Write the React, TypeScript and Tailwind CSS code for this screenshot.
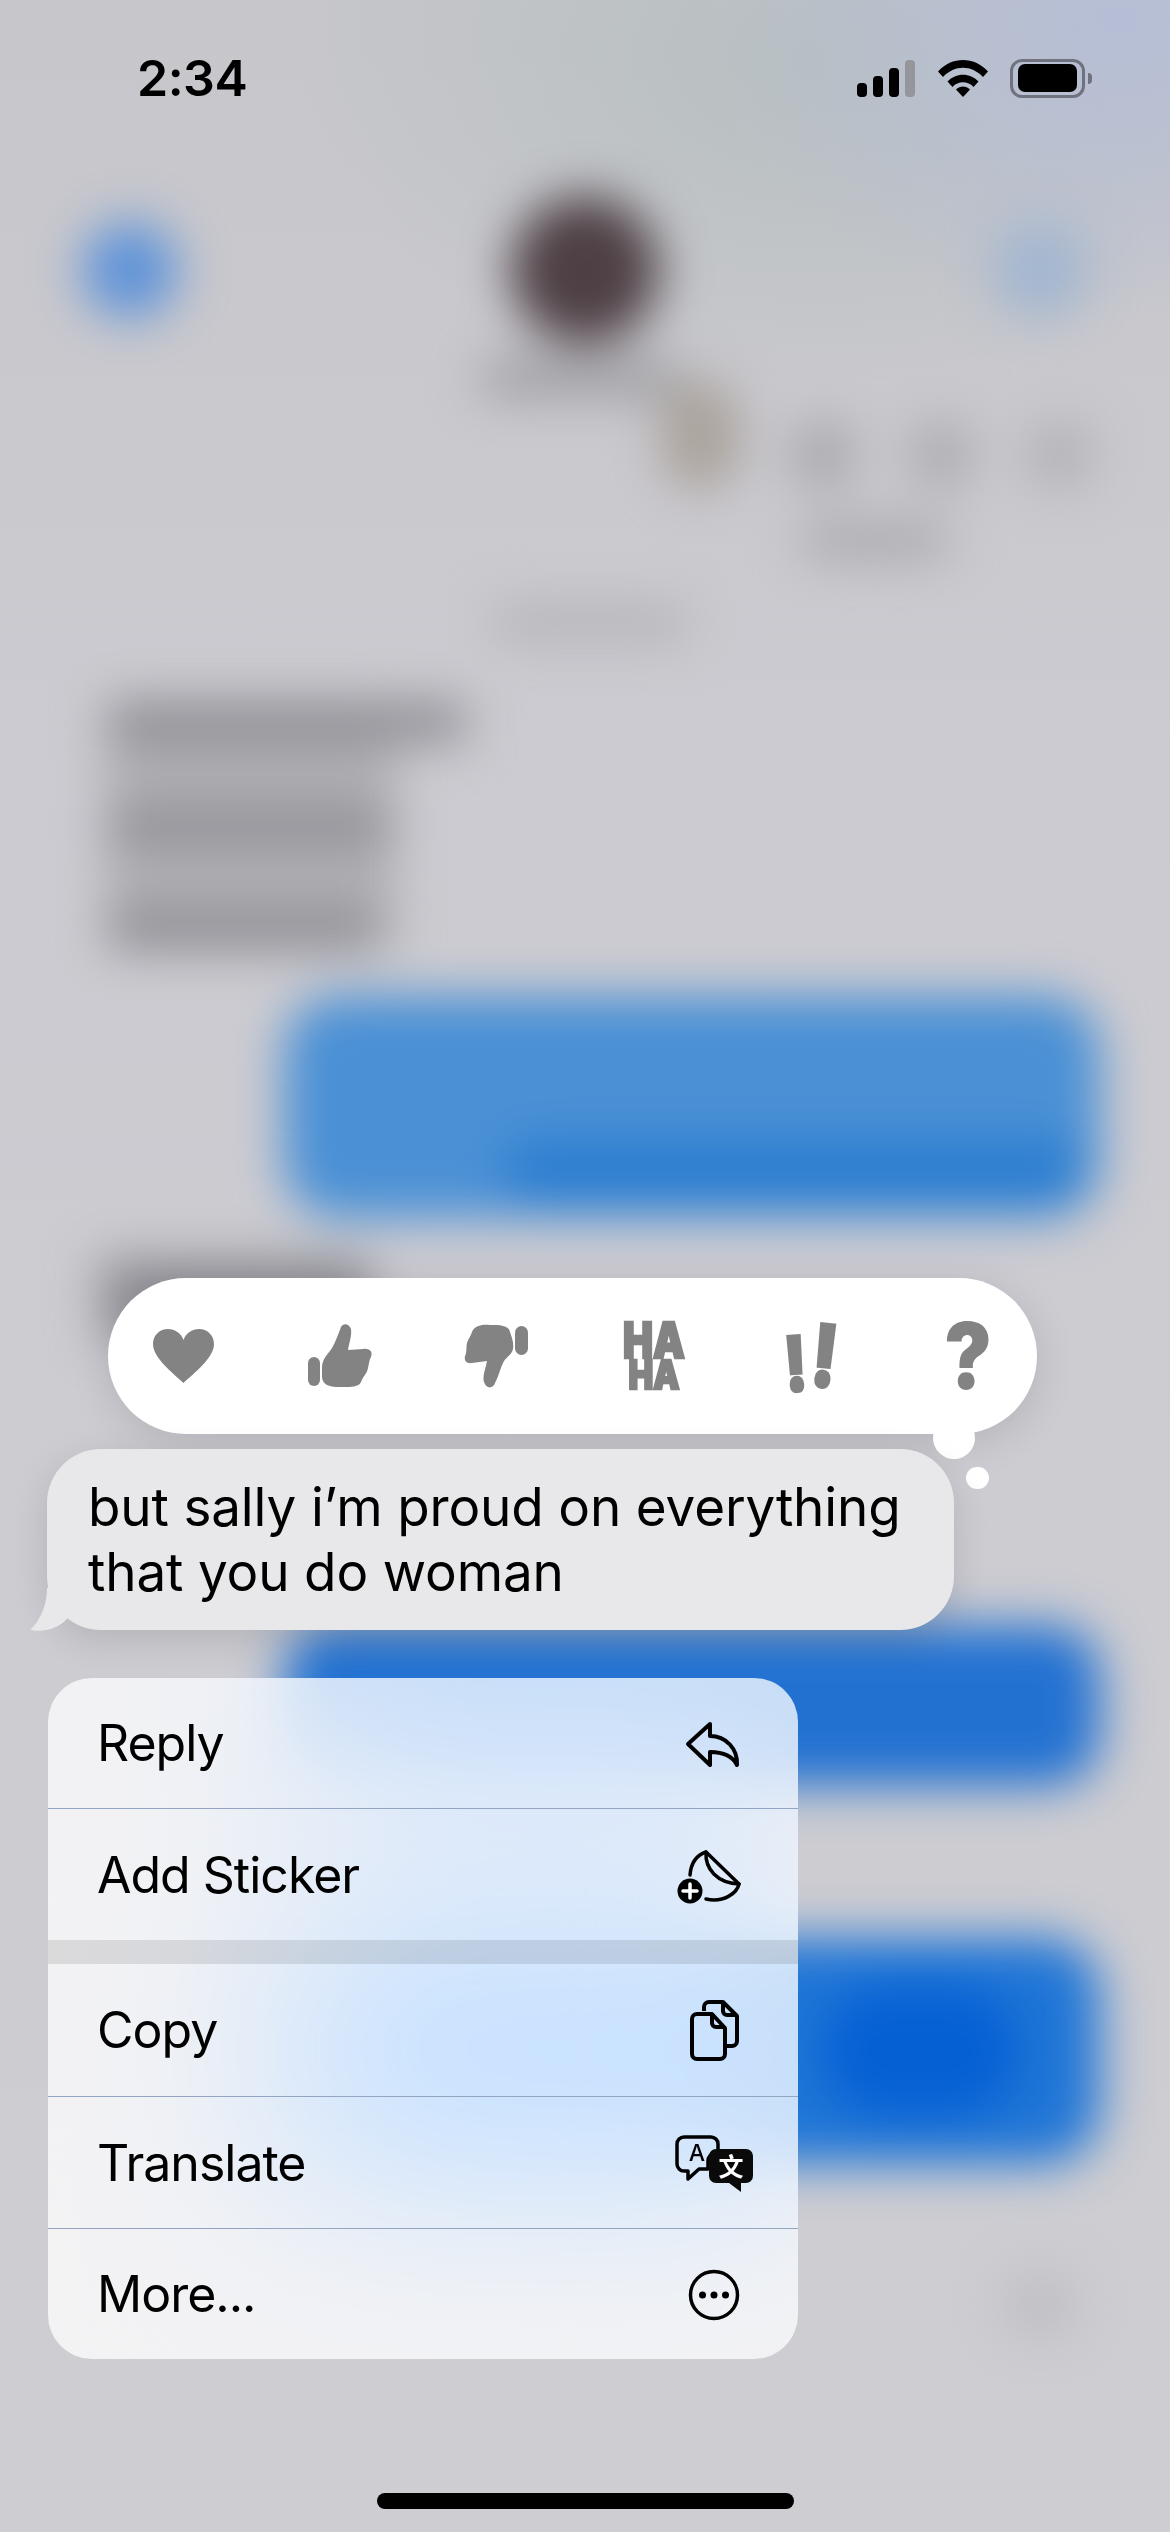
const stack = "font-['Inter','Noto_Sans',sans-serif]";

// the chat behind the menu, laid out as a page and blurred as one
function Blurred() {
  return (
    <div className="absolute inset-0 overflow-hidden bg-[radial-gradient(ellipse_420px_300px_at_1120px_20px,#b6bed6_0%,rgba(182,190,214,0)_100%),radial-gradient(ellipse_520px_330px_at_820px_60px,#b7bfc0_0%,rgba(183,191,192,0)_100%),linear-gradient(180deg,#c6c6cb_0%,#cccbd1_30%,#cdcdd2_100%)]">
      <div className="flex h-full flex-col pt-[196px] blur-[24px]">
        <div className="flex h-[148px] items-center justify-between pl-[82px] pr-[82px]">
          <div className="h-[96px] w-[96px] rounded-full bg-[#5f93d8]" />
          <div className="h-[148px] w-[148px] rounded-full bg-[#4d3f44]" />
          <div className="h-[96px] w-[96px] rounded-full bg-[#a2b6d0]" />
        </div>
        <div className="ml-[480px] mt-[16px] h-[36px] w-[200px] rounded-full bg-[#9c9ca0]" />

        <div className="ml-[660px] mt-[-16px] flex items-end gap-[48px]">
          <div className="h-[110px] w-[80px] rounded-full bg-[#aaa29b]" />
          <div className="h-[70px] w-[70px] rounded-full bg-[#a9a9ae]" />
          <div className="h-[70px] w-[70px] rounded-full bg-[#adadb2]" />
          <div className="h-[70px] w-[70px] rounded-full bg-[#b2b2b7]" />
        </div>
        <div className="ml-[800px] mt-[30px] h-[40px] w-[150px] rounded-full bg-[#aaaaaf]" />
        <div className="ml-[490px] mt-[46px] h-[34px] w-[200px] rounded-full bg-[#b2b2b7]" />

        <div className="ml-[105px] mt-[60px] flex h-[250px] w-[290px] flex-col gap-[64px] bg-[#afafb4] pl-[5px] pt-[2px]">
          <div className="h-[40px] w-[355px] shrink-0 bg-[#8c8c92]" />
          <div className="h-[40px] w-[280px] shrink-0 bg-[#909096]" />
          <div className="h-[40px] w-[265px] shrink-0 bg-[#8c8c92]" />
        </div>

        <div className="ml-[284px] mt-[46px] flex h-[222px] w-[816px] items-end justify-end rounded-[56px] bg-[#4a90d5] p-[16px]">
          <div className="h-[60px] w-[580px] rounded-[30px] bg-[#2a7cd0]" />
        </div>
        <div className="ml-[100px] mt-[40px] h-[80px] w-[270px] bg-[#8f8f95]" />

        <div className="ml-[284px] mt-[288px] h-[160px] w-[816px] rounded-[50px] bg-[#2271d1]" />
        <div className="ml-[284px] mt-[152px] flex h-[226px] w-[816px] items-center justify-end rounded-[56px] bg-[#1f75d6] pr-[80px]">
          <div className="h-[130px] w-[200px] rounded-full bg-[#0560d4]" />
        </div>
        <div className="ml-[1005px] mt-[111px] h-[60px] w-[70px] rounded-full bg-[#bdbdc2]" />
      </div>
    </div>
  );
}

function StatusBar() {
  return (
    <div className="flex items-center justify-between pl-[137px] pr-[78px] pt-[58px]">
      <span className="text-[50px] font-semibold leading-[40px] tracking-[-0.5px] text-black">2:34</span>
      <div className="flex items-center">
        <svg width="58" height="37" viewBox="0 0 58 37">
          <rect x="0" y="23" width="10" height="14" rx="4" fill="#000" />
          <rect x="16" y="16" width="10" height="21" rx="4" fill="#000" />
          <rect x="32" y="8" width="10" height="29" rx="4" fill="#000" />
          <rect x="48" y="0" width="10" height="37" rx="4" fill="#94969c" />
        </svg>
        <svg className="ml-[23px]" width="50" height="37" viewBox="0 0 50 37">
          <path d="M0 11.5C14 -3.8 36 -3.8 50 11.5L45 17C33.5 4.6 16.5 4.6 5 17Z" fill="#000" />
          <path d="M9.5 21.5C18 12.4 32 12.4 40.5 21.5L35.5 27C30 20.8 20 20.8 14.5 27Z" fill="#000" />
          <path d="M18 29.5C22 25.6 28 25.6 32 29.5L25 37Z" fill="#000" />
        </svg>
        <div className="ml-[22px] flex h-[39px] w-[75px] items-center justify-center rounded-[12px] border-[3px] border-[#70737f]">
          <div className="h-[28px] w-[59px] rounded-[7px] bg-black" />
        </div>
        <div className="ml-[3px] h-[11px] w-[4px] rounded-r-full bg-[#70737f]" />
      </div>
    </div>
  );
}

function Cell({ children }: { children: React.ReactNode }) {
  return <div className="flex h-[80px] w-[80px] shrink-0 items-center justify-center">{children}</div>;
}

function Reactions() {
  const gray = "#838383";
  return (
    <div className="relative ml-[108px] flex h-[156px] w-[929px] items-center gap-[77px] rounded-[78px] bg-white pl-[35px] shadow-[0_8px_40px_rgba(0,0,0,0.12)]">
      <Cell>
        <svg width="80" height="80" viewBox="0 0 80 80">
          <path d="M40.5 67C30 57 10 42 10 28C10 19 17 13 25 13C32 13 38 17 40.5 24C43 17 49 13 56 13C64 13 71 19 71 28C71 42 51 57 40.5 67Z" fill={gray} />
        </svg>
      </Cell>
      <Cell>
        <svg width="80" height="80" viewBox="0 0 80 80">
          <rect x="8" y="41" width="12" height="29" rx="6" fill={gray} />
          <path d="M22 50C23 42 28 38 32 32C36 25 39 16 41 11C43 7 49 7 51 13C52 20 49 27 48 34L63 33C70 32 73 36 71 41C69 44 69 48 68 52C67 58 63 60 61 66C59 71 50 71 45 71C35 71 22 72 22 60Z" fill={gray} />
        </svg>
      </Cell>
      <Cell>
        <svg width="80" height="80" viewBox="0 0 80 80">
          <rect x="58" y="10" width="13" height="29" rx="6.5" fill={gray} />
          <path d="M15 16C17 10 25 8 33 9C42 9 52 9 53 16C55 22 57 27 56 33C55 38 50 41 47 45C43 52 42 60 38 67C36 73 29 73 27 66C25 60 29 52 30 45L15 47C9 48 7 44 8 40C10 37 9 31 10 27C11 23 14 20 15 16Z" fill={gray} />
        </svg>
      </Cell>
      <Cell>
        <div className="flex flex-col items-center gap-[8px] font-black text-[#838383] [-webkit-text-stroke:2px_#838383]">
          <span className="scale-y-[1.25] text-[40px] leading-[30px]">HA</span>
          <span className="scale-y-[1.2] text-[33px] leading-[24px]">HA</span>
        </div>
      </Cell>
      <Cell>
        <div className="flex items-start gap-[5px] font-black text-[#838383] [-webkit-text-stroke:2px_#838383]">
          <span className="mt-[14px] rotate-[-4deg] scale-y-[1.27] text-[60px] leading-[46px]">!</span>
          <span className="mt-[3px] rotate-[6deg] scale-y-[1.27] text-[68px] leading-[52px]">!</span>
        </div>
      </Cell>
      <Cell>
        <span className="scale-y-[1.15] text-[80px] font-black leading-[80px] text-[#838383]">?</span>
      </Cell>
      <div className="absolute left-[825px] top-[139px] h-[42px] w-[42px] rounded-full bg-white" />
      <div className="absolute left-[858px] top-[189px] h-[22px] w-[23px] rounded-full bg-white" />
    </div>
  );
}

function Bubble() {
  return (
    <div className="relative ml-[47px] mt-[15px] w-[907px] rounded-[54px] bg-[#e8e8ea] pb-[25px] pl-[41px] pr-[30px] pt-[26px] text-[53px] leading-[65px] tracking-[-0.15px] text-black shadow-[0_10px_36px_rgba(0,0,0,0.12)]">
      but sally i’m proud on everything
      <br />
      that you do woman
      <svg className="absolute left-[-18px] top-[139px]" width="56" height="44" viewBox="0 0 56 44">
        <path d="M18 0C18 16 12 32 1 42C14 44 28 42 39 30L54 10L50 0Z" fill="#e8e8ea" />
      </svg>
    </div>
  );
}

function Row({ label, h, children }: { label: string; h: string; children: React.ReactNode }) {
  return (
    <div className={`flex items-center justify-between pl-[49px] pr-[44px] ${h}`}>
      <span className="text-[50px] leading-[60px] tracking-[-1px] text-black">{label}</span>
      {children}
    </div>
  );
}

function Divider() {
  return <div className="h-px bg-[#93a5c2]" />;
}

function Menu() {
  return (
    <div className="ml-[48px] mt-[48px] w-[750px] overflow-hidden rounded-[44px] bg-white/75 backdrop-blur-[100px] backdrop-saturate-150">
      <Row label="Reply" h="h-[130px]">
        <svg width="80" height="80" viewBox="0 0 80 80" fill="none" stroke="#000" strokeWidth="4" strokeLinejoin="round" strokeLinecap="round">
          <path d="M36 21L14 41L36 62V49C48 49 58 52 63 62C64 46 52 33 36 33Z" />
        </svg>
      </Row>
      <Divider />
      <Row label="Add Sticker" h="h-[131px]">
        <svg width="80" height="80" viewBox="0 0 80 80" fill="none" stroke="#000" strokeWidth="3.5" strokeLinecap="round" strokeLinejoin="round">
          <path d="M16 40C17 28 23 20 32 17L65 49C63 58 50 68 32 64" />
          <path d="M32 17C31 34 43 48 65 49" />
          <circle cx="16" cy="56" r="12.5" fill="#000" stroke="none" />
          <path d="M16 49V63M9 56H23" stroke="#fff" strokeWidth="3.5" />
        </svg>
      </Row>
      <div className="h-[24px] bg-black/10" />
      <Row label="Copy" h="h-[132px]">
        <svg width="80" height="80" viewBox="0 0 80 80" fill="none" stroke="#000" strokeWidth="4" strokeLinejoin="round">
          <path d="M30 21V17A5 5 0 0 1 35 12H49L63 26V51A5 5 0 0 1 58 56H53" />
          <path d="M49 12V21A4 4 0 0 0 53 25H63" />
          <path d="M38 24H23A5 5 0 0 0 18 29V64A5 5 0 0 0 23 69H46A5 5 0 0 0 51 64V38Z" />
          <path d="M38 24V33A4 4 0 0 0 42 37H51" />
        </svg>
      </Row>
      <Divider />
      <Row label="Translate" h="h-[131px]">
        <svg width="80" height="80" viewBox="0 0 80 80">
          <path d="M10 14H37A7 7 0 0 1 44 21V30H41A8 8 0 0 0 34 38V46H25L14 56V48H10A7 7 0 0 1 3 41V21A7 7 0 0 1 10 14Z" fill="none" stroke="#000" strokeWidth="3.5" strokeLinejoin="round" />
          <path d="M42 26H72A7 7 0 0 1 79 33V53A7 7 0 0 1 72 60H67V69L55 60H42A7 7 0 0 1 35 53V33A7 7 0 0 1 42 26Z" fill="#0a0a0a" />
          <text x="23" y="38" textAnchor="middle" fontSize="23" fontWeight="500" fill="#000">A</text>
          <text x="57" y="53" textAnchor="middle" fontSize="25" fontWeight="700" fill="#fff" fontFamily="'Noto Sans CJK SC',sans-serif">文</text>
        </svg>
      </Row>
      <Divider />
      <Row label="More..." h="h-[130px]">
        <svg width="80" height="80" viewBox="0 0 80 80">
          <circle cx="40" cy="41" r="23.5" fill="none" stroke="#000" strokeWidth="3.5" />
          <circle cx="28.5" cy="41" r="3.5" />
          <circle cx="40" cy="41" r="3.5" />
          <circle cx="51.5" cy="41" r="3.5" />
        </svg>
      </Row>
    </div>
  );
}

export default function App() {
  return (
    <div className={`relative h-[2532px] w-[1170px] overflow-hidden ${stack}`}>
      <Blurred />
      <div className="relative flex h-full flex-col">
        <StatusBar />
        <div className="h-[1180px] shrink-0" />
        <Reactions />
        <Bubble />
        <Menu />
        <div className="mx-auto mt-[134px] h-[16px] w-[417px] rounded-full bg-black" />
      </div>
    </div>
  );
}
